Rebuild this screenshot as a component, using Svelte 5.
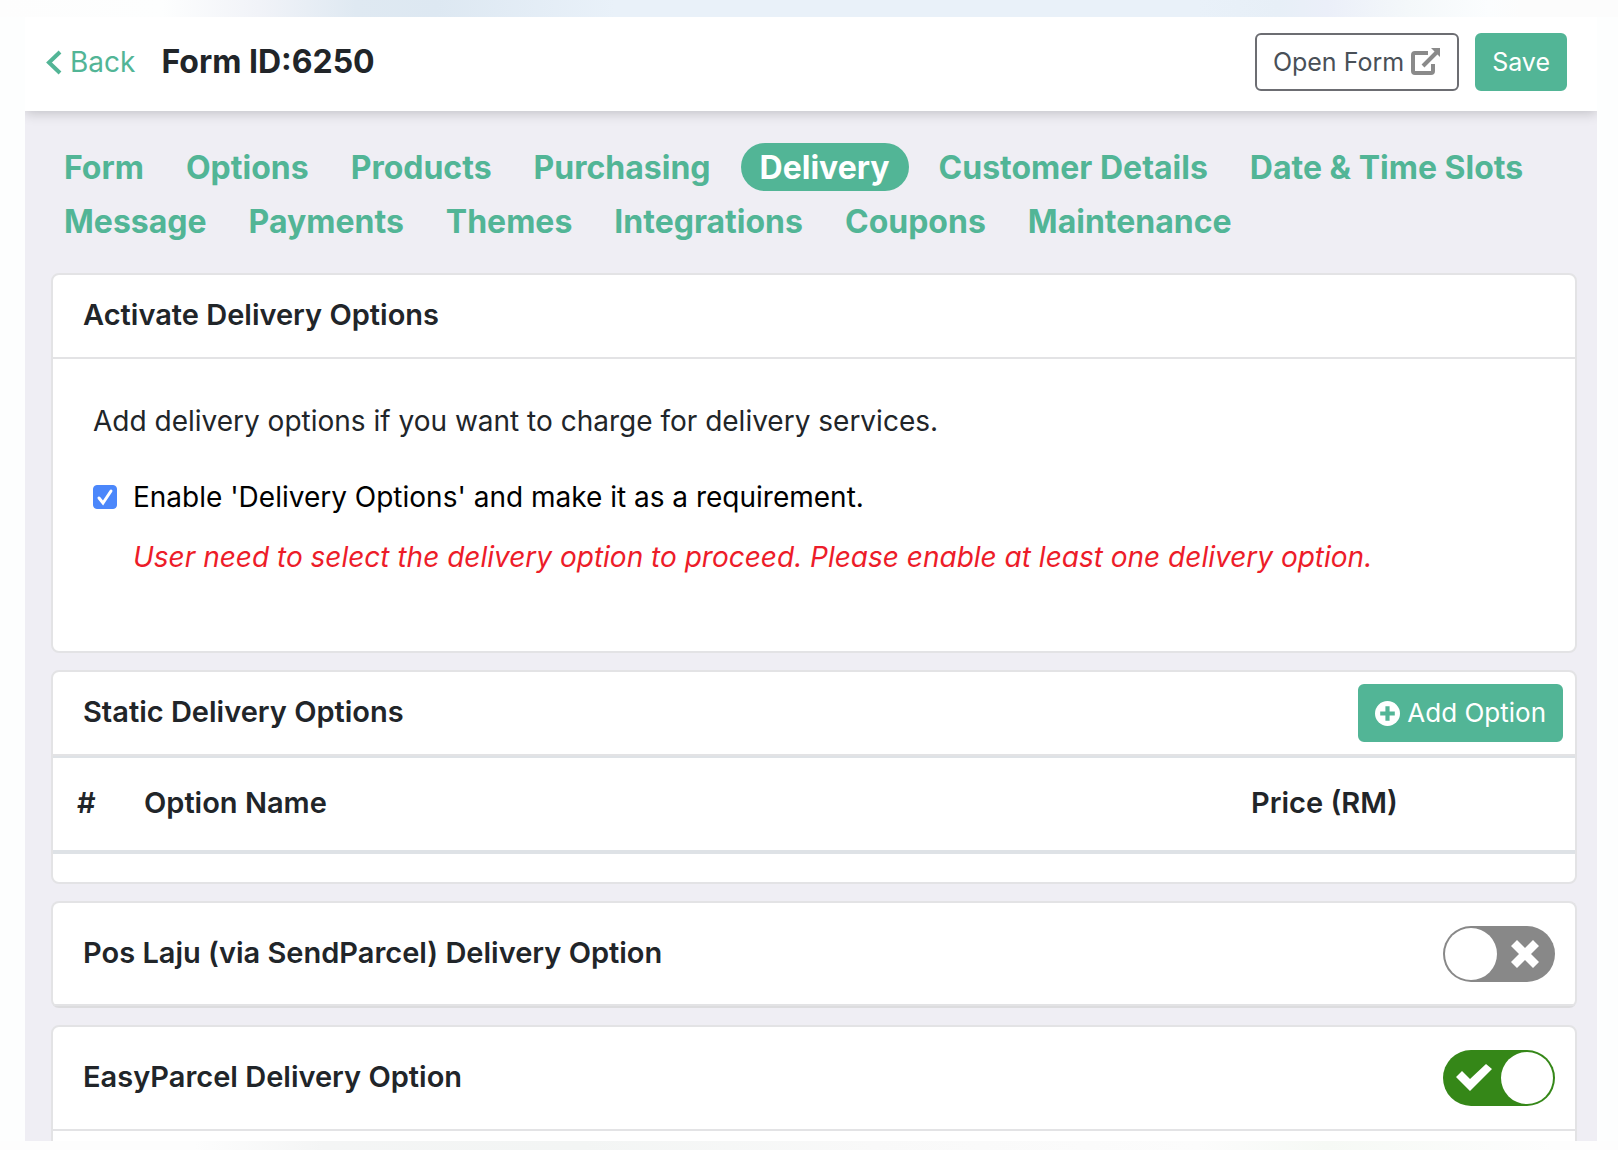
<script>
  const tabs = [
    "Form", "Options", "Products", "Purchasing", "Delivery", "Customer Details", "Date & Time Slots",
    "Message", "Payments", "Themes", "Integrations", "Coupons", "Maintenance",
  ];

  let activeTab = $state("Delivery");
  let required = $state(true);
  let posLaju = $state(false);
  let easyParcel = $state(true);
</script>

{#snippet toggleIcons()}
  <svg class="mark check" viewBox="0 0 36 28" aria-hidden="true"><path d="M0 13l6-6 8 8L30 0l6 5-22 22z" /></svg>
  <svg class="mark cross" viewBox="0 0 28 28" aria-hidden="true"><path d="M6 0l8 8 8-8 6 6-8 8 8 8-6 6-8-8-8 8-6-6 8-8-8-8z" /></svg>
{/snippet}

<div class="page">
  <div class="panel">
    <header>
      <a class="back" href="#back">
        <svg width="16" height="25" viewBox="0 0 16 25" aria-hidden="true"><path d="M14 2L3 12.500l11 10.500" fill="none" stroke="currentColor" stroke-width="4" /></svg>
        Back
      </a>
      <h1>Form ID:6250</h1>
      <div class="actions">
        <button class="btn outline">
          Open Form
          <svg width="30" height="28" viewBox="0 0 30 28" fill="none" stroke="#8a8a8a" stroke-width="4" aria-hidden="true">
            <path d="M17 5H4q-2 0-2 2v16q0 2 2 2h16q2 0 2-2v-7" />
            <path d="M12 18L26 4" />
            <path d="M20 0h9v9z" fill="#8a8a8a" stroke="none" />
          </svg>
        </button>
        <button class="btn">Save</button>
      </div>
    </header>

    <nav>
      {#each tabs as tab}
        <a href="#{tab}" class:active={tab === activeTab} onclick={() => (activeTab = tab)}>{tab}</a>
      {/each}
    </nav>

    <main>
      <section class="card">
        <div class="card-head"><h2>Activate Delivery Options</h2></div>
        <div class="card-body">
          <p>Add delivery options if you want to charge for delivery services.</p>
          <label class="check-row">
            <input type="checkbox" bind:checked={required} />
            <svg width="24" height="24" viewBox="0 0 24 24" aria-hidden="true"><path d="M6 13l4 5 8-12" fill="none" stroke="#fff" stroke-width="3" stroke-linecap="round" /></svg>
            Enable 'Delivery Options' and make it as a requirement.
          </label>
          <p class="warning">User need to select the delivery option to proceed. Please enable at least one delivery option.</p>
        </div>
      </section>

      <section class="card">
        <div class="card-head">
          <h2>Static Delivery Options</h2>
          <button class="btn add">
            <svg width="25" height="25" viewBox="0 0 24 24" aria-hidden="true">
              <circle cx="12" cy="12" r="12" fill="#fff" />
              <path d="M12 5v14M5 12h14" stroke="#52b596" stroke-width="4" />
            </svg>
            Add Option
          </button>
        </div>
        <table>
          <thead>
            <tr><th class="num">#</th><th>Option Name</th><th class="price">Price (RM)</th></tr>
          </thead>
        </table>
      </section>

      <section class="card closed">
        <div class="card-head tall">
          <h2 id="pos-laju">Pos Laju (via SendParcel) Delivery Option</h2>
          <label class="toggle">
            <input type="checkbox" role="switch" aria-labelledby="pos-laju" bind:checked={posLaju} />
            {@render toggleIcons()}
          </label>
        </div>
      </section>

      <section class="card open">
        <div class="card-head tall">
          <h2 id="easyparcel">EasyParcel Delivery Option</h2>
          <label class="toggle">
            <input type="checkbox" role="switch" aria-labelledby="easyparcel" bind:checked={easyParcel} />
            {@render toggleIcons()}
          </label>
        </div>
      </section>
    </main>
  </div>
</div>

<style>
  :global(body) { margin: 0; }
  .page {
    box-sizing: border-box;
    height: 100vh;
    padding: 17px 21px 9px 25px;
    display: flex;
    background:
      linear-gradient(90deg, #fdfdfd, #fdfefe 10%, #f1f3f8 16%, #dfe9f2 22%, #dde8f2 27%, #e9f1f9 38%, #e9f1f9 74%, #e7eff7 79%, #ebeff9 82%, #f4f8fa 87%, #fbfdfe 92%, #fcfcfc 94%) top / 100% 17px no-repeat,
      linear-gradient(90deg, #fdfdfd 12%, #f4f5f5 20%, #f3f5f4 36%, #f9f9f9 54%, #fcfcfc 74%, #f6f9f5 82%, #fdfdfd 96%) bottom / 100% 9px no-repeat,
      #fdfefe;
    font-family: Inter, "Liberation Sans", sans-serif;
    font-size: 28px;
    line-height: 42px;
    color: #212529;
  }
  .page *, .page *::before { box-sizing: border-box; }
  .panel { flex: 1; min-width: 0; background: #efeef4; overflow: hidden; }
  h1, h2, p { margin: 0; }
  a { color: #52b596; text-decoration: none; }

  header {
    display: flex;
    align-items: center;
    padding: 16px 30px 20px 21px;
    background: #fff;
    box-shadow: 0 2px 12px rgba(0, 0, 0, 0.2);
  }
  .back { display: flex; align-items: center; gap: 8px; }
  h1 { margin-left: 26px; font-size: 32px; font-weight: 700; }
  .actions { margin-left: auto; display: flex; gap: 16px; }
  .btn {
    display: flex;
    align-items: center;
    gap: 7px;
    height: 58px;
    padding: 0 15px;
    border: 2px solid #52b596;
    border-radius: 6px;
    background: #52b596;
    color: #fff;
    font: inherit;
    font-size: 25px;
  }
  .outline { border-color: #6c6d72; background: #fff; color: #495057; padding: 0 16px; }
  .add { font-size: 26px; }

  nav { display: flex; flex-wrap: wrap; gap: 6px 18px; padding: 32px 18px 28px 27px; }
  nav a { padding: 1px 12px 0; border-radius: 24px; font-size: 32px; line-height: 47px; font-weight: 700; }
  nav a.active { padding: 1px 19px 0; background: #52b596; color: #fff; }

  main { padding: 0 20px 0 26px; display: flex; flex-direction: column; gap: 17px; }
  .card { background: #fff; border: 2px solid #e3e3e5; border-radius: 8px; }
  .card-head {
    display: flex;
    align-items: center;
    justify-content: space-between;
    min-height: 84px;
    padding: 0 12px 0 30px;
    border-bottom: 2px solid #e3e3e5;
  }
  .tall { min-height: 104px; padding-right: 20px; }
  h2 { padding-bottom: 2px; font-size: 29px; font-weight: 600; }
  .card-body { padding: 41px 40px 73px; }
  .check-row { position: relative; display: flex; align-items: center; gap: 16px; margin: 34px 0 18px; color: #000; }
  .check-row input { appearance: none; width: 24px; height: 24px; margin: 0; border: 1px solid #4b87fb; border-radius: 4px; background: #fff; }
  .check-row input:checked { background: #4b87fb; }
  .check-row svg { position: absolute; left: 0; }
  .warning { margin-left: 40px; color: #ed1c29; font-style: italic; }

  table { width: 100%; border-collapse: collapse; margin-bottom: 28px; }
  th { height: 95px; padding: 0 24px 2px; text-align: left; font-size: 29px; font-weight: 600; border-bottom: 4px solid #dee2e6; border-top: 2px solid #dee2e6; }
  .num { width: 67px; padding-right: 0; }
  .price { width: 348px; }

  .closed { border-bottom-color: #dcdcde; }
  .closed .tall { min-height: 103px; }
  .open { min-height: 200px; }
  .toggle { position: relative; display: flex; }
  .toggle input {
    appearance: none;
    display: flex;
    width: 112px;
    height: 56px;
    margin: 0;
    padding: 2px;
    border-radius: 28px;
    background: #888;
  }
  .toggle input::before { content: ""; width: 52px; height: 52px; border-radius: 50%; background: #fff; }
  .toggle input:checked { justify-content: flex-end; background: #358718; }
  .mark { position: absolute; top: 14px; height: 28px; fill: #fff; }
  .check { left: 13px; width: 36px; }
  .cross { right: 16px; width: 28px; }
  .toggle input:checked ~ .cross, .toggle input:not(:checked) ~ .check { display: none; }
</style>
